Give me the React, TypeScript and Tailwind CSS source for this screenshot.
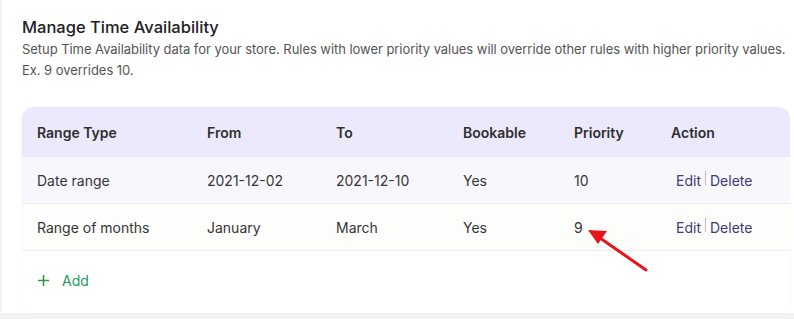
import React from "react";

const rows = [
  { type: "Date range", from: "2021-12-02", to: "2021-12-10", bookable: "Yes", priority: "10", bg: "bg-[#f8f7fc]" },
  { type: "Range of months", from: "January", to: "March", bookable: "Yes", priority: "9", bg: "bg-[#fdfdfb]" },
];

const grid = "grid grid-cols-[170px_129px_127px_111px_97px_1fr] pl-[15px] items-center";

export default function App() {
  return (
    <div className="h-[319px] w-[794px] bg-[#f3f3f4] pl-[2px] overflow-hidden" style={{ fontFamily: "Inter, 'Noto Sans', sans-serif" }}>
      <div className="h-[313px] bg-white pl-[20px] pr-[4px] pt-[16px] relative">
        <h2 className="text-[16.5px] leading-[22px] font-medium text-[#212121]">Manage Time Availability</h2>
        <p className="mt-[1px] text-[13px] leading-[21px] text-[#555] tracking-[-0.05px]">
          <span className="whitespace-nowrap">
            Setup Time Availability data for your store. Rules with lower priority values will override other rules with higher priority values.
          </span>
          <br />
          Ex. 9 overrides 10.
        </p>
        <div className="mt-[26px] rounded-[12px] bg-white shadow-[0_0_2px_rgba(0,0,0,0.08)] overflow-hidden h-[206px] relative">
          <div className={`${grid} h-[50px] bg-[#ede9fd] text-[14px] font-semibold text-[#2f2f2f]`}>
            <div>Range Type</div>
            <div>From</div>
            <div>To</div>
            <div>Bookable</div>
            <div>Priority</div>
            <div>Action</div>
          </div>
          {rows.map((r) => (
            <div key={r.type} className={`${grid} h-[47px] ${r.bg} border-b border-[#ececec] text-[14px] text-[#353535]`}>
              <div>{r.type}</div>
              <div>{r.from}</div>
              <div>{r.to}</div>
              <div>{r.bookable}</div>
              <div>{r.priority}</div>
              <div className="flex items-center pl-[5px] text-[#3f3a72]">
                <span>Edit</span>
                <span className="mx-[4px] h-[14px] w-px bg-[#bdbdbd] -mt-[4px]" />
                <span>Delete</span>
              </div>
            </div>
          ))}
          <div className="flex items-center pl-[15px] h-[60px] pb-[2px] text-[14px] text-[#24985e]">
            <svg width="13" height="13" viewBox="0 0 13 13" className="text-[#2e9a48]">
              <path d="M6.5 1v11M1 6.5h11" stroke="currentColor" strokeWidth="1.6" />
            </svg>
            <span className="ml-[12px]">Add</span>
          </div>
          <svg className="absolute left-0 top-0" width="770" height="206" viewBox="0 0 770 206">
            <line x1="624" y1="163" x2="578" y2="131" stroke="#e8141b" strokeWidth="3" strokeLinecap="round" />
            <polygon points="566,123 585,124 576,137" fill="#e8141b" />
          </svg>
        </div>
      </div>
    </div>
  );
}
